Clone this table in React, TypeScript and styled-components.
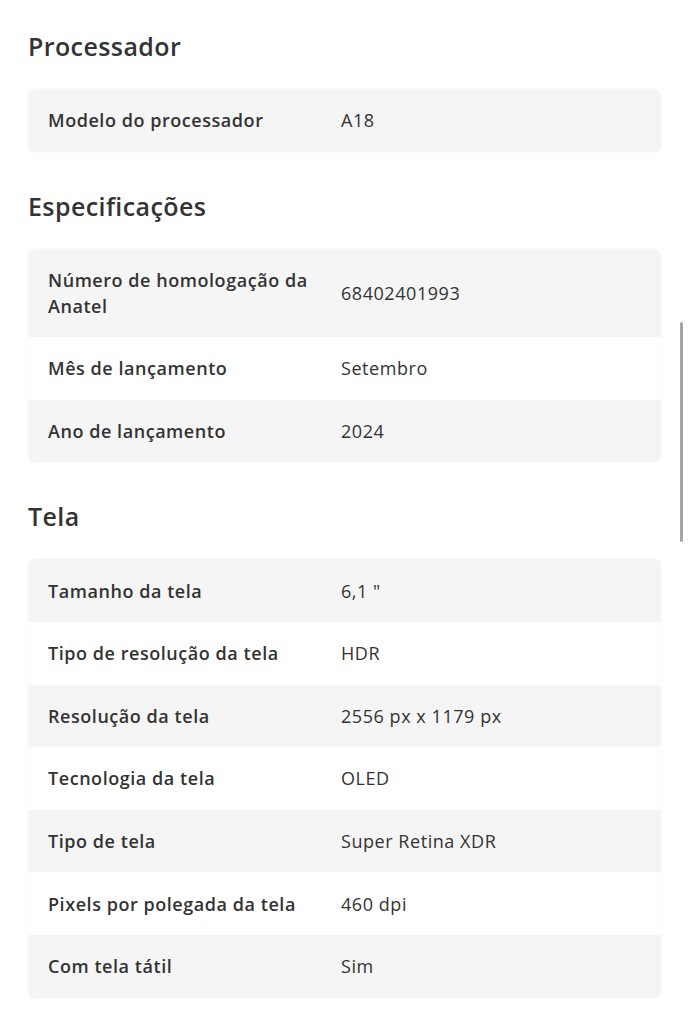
import React from "react";
import styled, { createGlobalStyle } from "styled-components";

const GlobalStyle = createGlobalStyle`
  html, body {
    margin: 0;
    padding: 0;
    background: #ffffff;
  }
  body {
    font-family: "Open Sans", "Lato", sans-serif;
    color: #333333;
    -webkit-font-smoothing: antialiased;
  }
`;

const Page = styled.main`
  padding: 31px 28px 40px 28px;
  display: flex;
  flex-direction: column;
`;

const Section = styled.section`
  display: flex;
  flex-direction: column;
  & + & {
    margin-top: 39px;
  }
`;

const Heading = styled.h2`
  margin: 0 0 28px 0;
  font-size: 25px;
  line-height: 30px;
  font-weight: 600;
  letter-spacing: 0.4px;
  color: #333333;
`;

const Table = styled.div`
  display: flex;
  flex-direction: column;
  border-radius: 6px;
  overflow: hidden;
  box-shadow: 0 0 0 1px rgba(0, 0, 0, 0.015);
`;

const Row = styled.div<{ $shaded: boolean }>`
  display: grid;
  grid-template-columns: 273px 1fr;
  column-gap: 20px;
  align-items: center;
  padding: 18.3px 20px;
  background: ${(p) => (p.$shaded ? "#f5f5f5" : "#ffffff")};
`;

const Label = styled.span`
  font-size: 18px;
  line-height: 26px;
  font-weight: 600;
  letter-spacing: 0.55px;
  color: #333333;
`;

const Value = styled.span`
  font-size: 18px;
  line-height: 26px;
  font-weight: 400;
  letter-spacing: 0.55px;
  color: #333333;
`;

const ScrollThumb = styled.div`
  position: fixed;
  top: 322px;
  right: 6px;
  width: 3px;
  height: 220px;
  border-radius: 2px;
  background: #a6a6a6;
`;

type Spec = { label: string; value: string };

const sections: { title: string; rows: Spec[] }[] = [
  {
    title: "Processador",
    rows: [{ label: "Modelo do processador", value: "A18" }],
  },
  {
    title: "Especificações",
    rows: [
      { label: "Número de homologação da Anatel", value: "68402401993" },
      { label: "Mês de lançamento", value: "Setembro" },
      { label: "Ano de lançamento", value: "2024" },
    ],
  },
  {
    title: "Tela",
    rows: [
      { label: "Tamanho da tela", value: "6,1 \"" },
      { label: "Tipo de resolução da tela", value: "HDR" },
      { label: "Resolução da tela", value: "2556 px x 1179 px" },
      { label: "Tecnologia da tela", value: "OLED" },
      { label: "Tipo de tela", value: "Super Retina XDR" },
      { label: "Pixels por polegada da tela", value: "460 dpi" },
      { label: "Com tela tátil", value: "Sim" },
    ],
  },
];

export default function App() {
  return (
    <>
      <GlobalStyle />
      <Page>
        {sections.map((s) => (
          <Section key={s.title}>
            <Heading>{s.title}</Heading>
            <Table>
              {s.rows.map((r, i) => (
                <Row key={r.label} $shaded={i % 2 === 0}>
                  <Label>{r.label}</Label>
                  <Value>{r.value}</Value>
                </Row>
              ))}
            </Table>
          </Section>
        ))}
      </Page>
      <ScrollThumb />
    </>
  );
}
